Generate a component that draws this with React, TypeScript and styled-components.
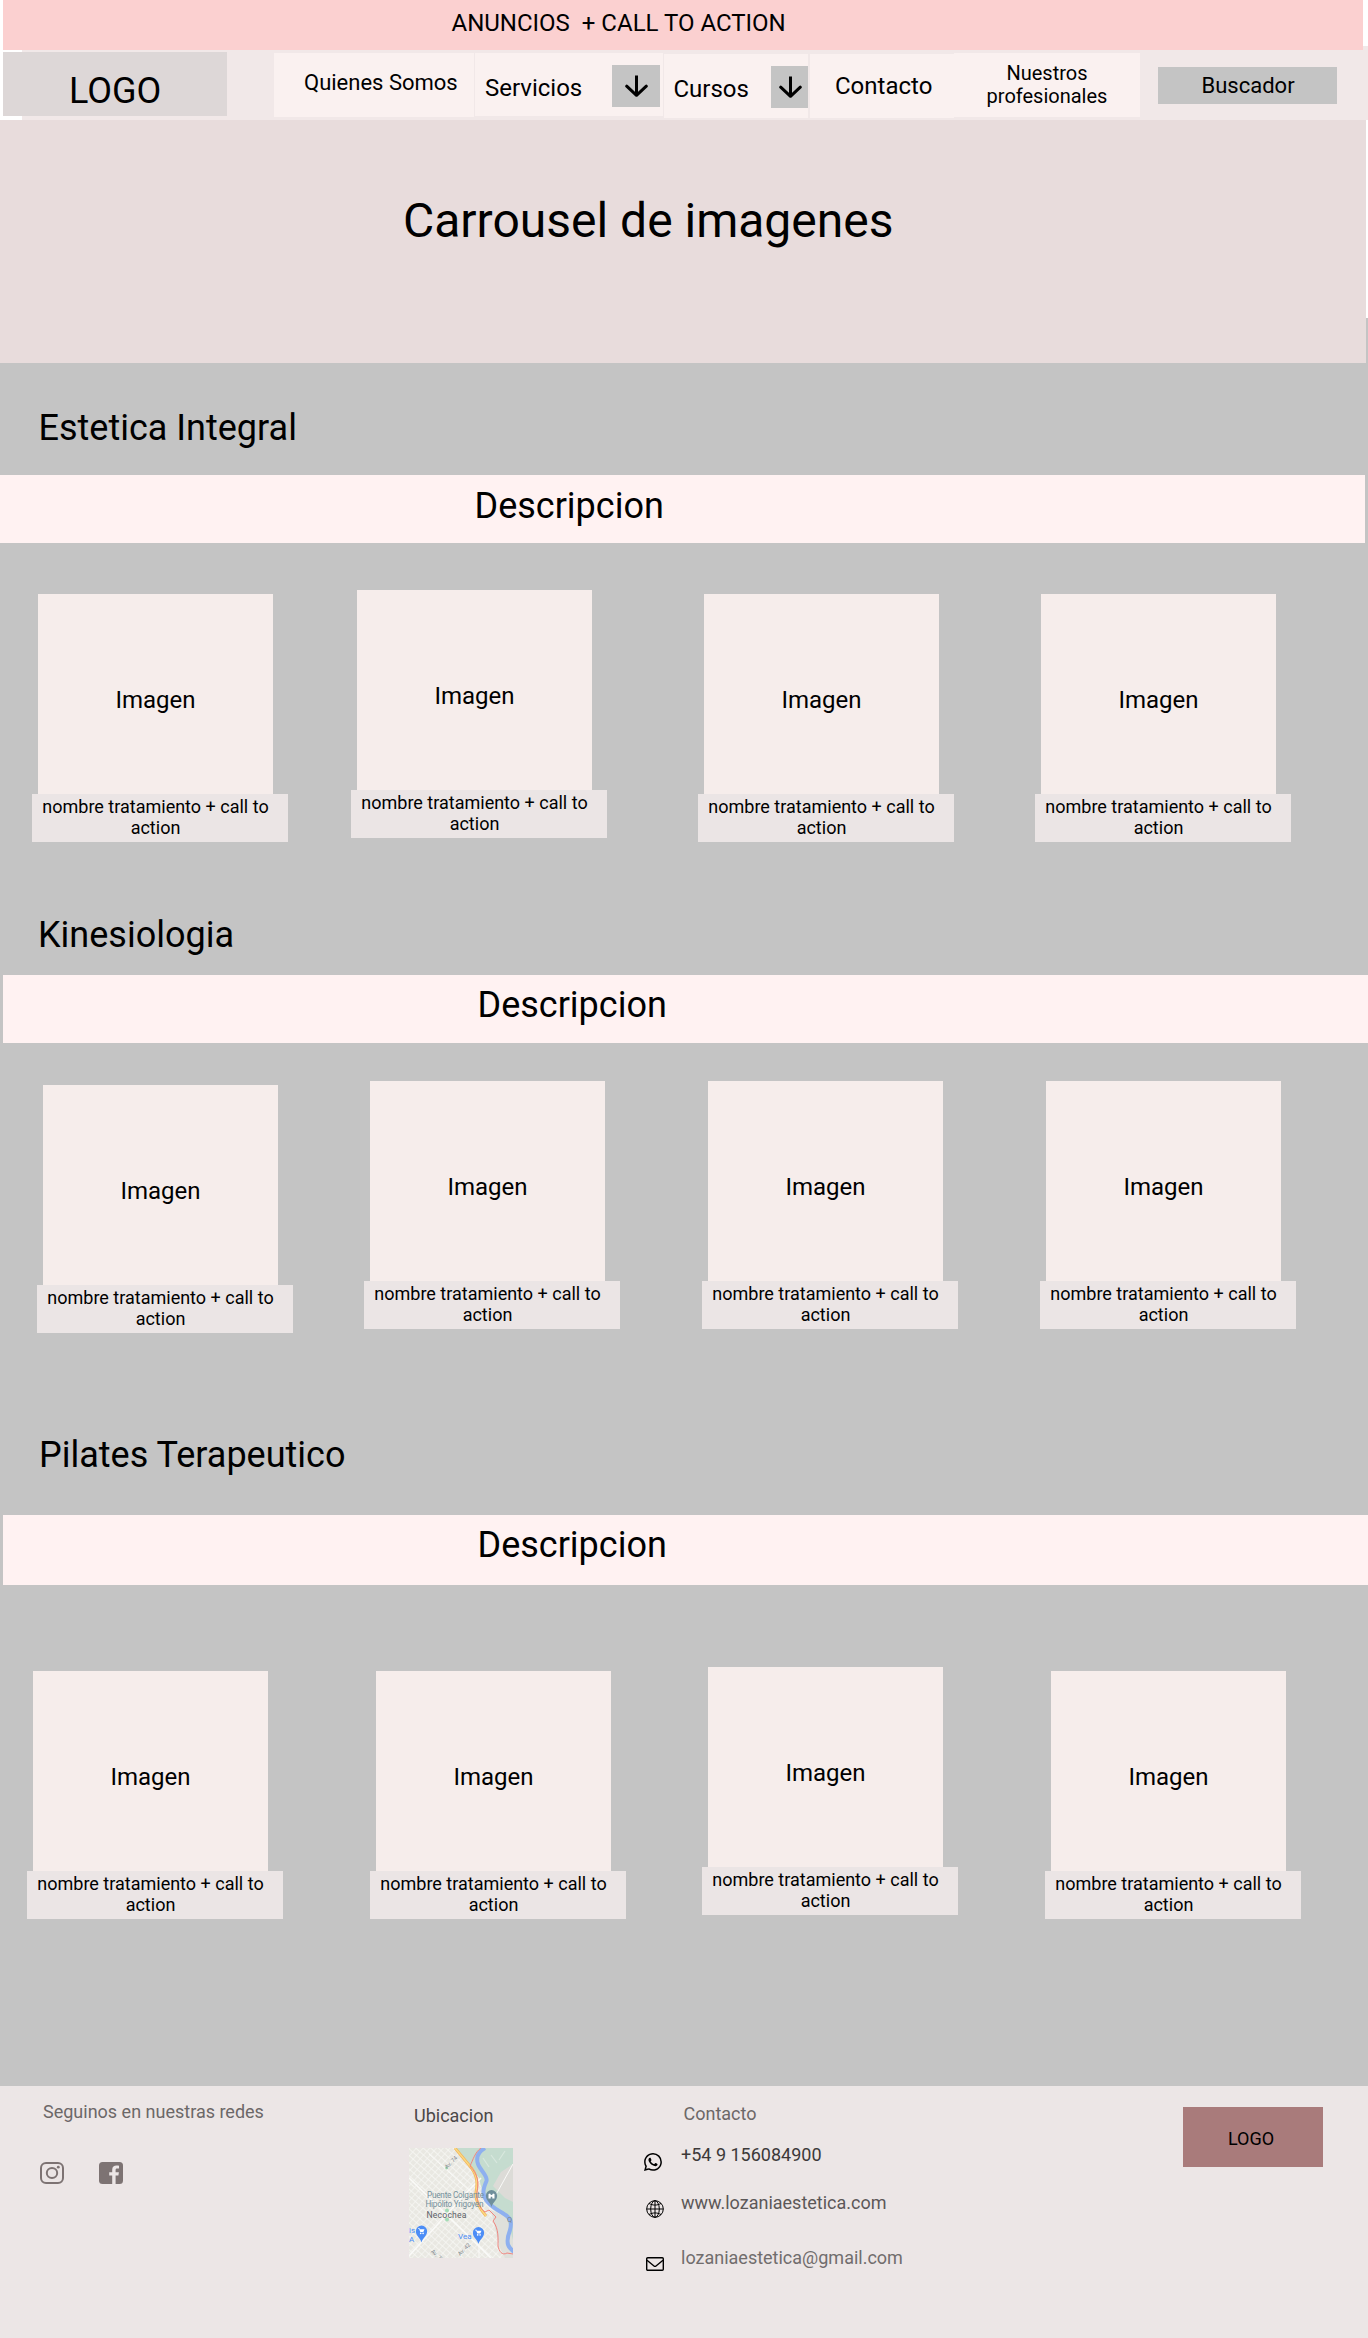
import React from "react";
import styled, { createGlobalStyle } from "styled-components";
import { BsWhatsapp } from "react-icons/bs";

const GlobalStyle = createGlobalStyle`
  * { box-sizing: border-box; }
  body {
    margin: 0;
    background: #ffffff;
    color: #000000;
    font-family: Roboto, "Liberation Sans", sans-serif;
  }
  h1, h2, h3, p { margin: 0; font-weight: 400; }
`;

const Page = styled.div`
  width: 1368px;
  height: 2338px;
  display: flex;
  flex-direction: column;
  overflow: hidden;
`;

const Announcement = styled.div`
  position: relative;
  z-index: 1;
  flex: none;
  height: 50px;
  margin: 0 5px 0 3px;
  padding: 9px 0 0 448.5px;
  background: #fbd0d0;
  font-size: 24px;
  line-height: 28px;
  white-space: pre;
`;

const Header = styled.header`
  flex: none;
  display: flex;
  align-items: flex-start;
  height: 74px;
  margin: -4px 0 0 22px;
  padding-top: 6px;
  background: #f1e8e8;
`;

const Brand = styled.div`
  width: 224px;
  height: 64px;
  margin: 0 47px 0 -19px;
  padding: 18px 0 0 66px;
  background: #ddd7d7;
  font-size: 36px;
  line-height: 42px;
`;

const Nav = styled.nav`
  display: flex;
  align-items: flex-start;
`;

const NavItem = styled.div<{
  $w: number;
  $h?: number;
  $drop?: number;
  $gap?: number;
  $pad: string;
  $size?: number;
}>`
  display: flex;
  align-items: flex-start;
  width: ${(p) => p.$w}px;
  height: ${(p) => p.$h ?? 64}px;
  margin: ${(p) => p.$drop ?? 1}px ${(p) => p.$gap ?? 1}px 0 0;
  padding: ${(p) => p.$pad};
  background: #faf1f0;
  font-size: ${(p) => p.$size ?? 24}px;
  line-height: 28px;
  white-space: nowrap;
`;

const NavText = styled.span<{ $top: number }>`
  display: block;
  padding-top: ${(p) => p.$top}px;
`;

const TwoLine = styled.span`
  width: 100%;
  font-size: 20px;
  line-height: 23px;
  text-align: center;
`;

const DropButton = styled.span<{ $w: number; $push: number }>`
  display: flex;
  justify-content: center;
  align-items: center;
  width: ${(p) => p.$w}px;
  height: 42px;
  margin: ${(p) => p.$push}px 0 0 auto;
  background: #c4c4c4;
`;

const Search = styled.div`
  width: 179px;
  height: 37px;
  margin: 15px 0 0 18px;
  padding: 6px 0 0 43.5px;
  background: #c4c4c4;
  font-size: 22px;
  line-height: 26px;
`;

const Carousel = styled.section`
  position: relative;
  z-index: 1;
  flex: none;
  width: 1366px;
  height: 243px;
  padding: 73px 0 0 403px;
  background: #e8dcdc;
  font-size: 48px;
  line-height: 56px;
`;

const Main = styled.main`
  flex: none;
  height: 1768px;
  margin-top: -45px;
  padding-top: 45px;
  background: #c4c4c4;
`;

const Section = styled.section<{ $top: number }>`
  padding-top: ${(p) => p.$top}px;
`;

const Title = styled.h2<{ $left: number }>`
  padding-left: ${(p) => p.$left}px;
  font-size: 36px;
  line-height: 42px;
`;

const Description = styled.p<{ $top: number; $h: number; $margin: string; $pad: number }>`
  height: ${(p) => p.$h}px;
  margin: ${(p) => p.$top}px ${(p) => p.$margin};
  padding: ${(p) => p.$pad}px 0 0 474.5px;
  background: #fff2f2;
  font-size: 36px;
  line-height: 42px;
`;

const Cards = styled.div<{ $top: number; $left: number; $cols: string }>`
  display: grid;
  grid-template-columns: ${(p) => p.$cols};
  align-items: start;
  height: 252px;
  margin-top: ${(p) => p.$top}px;
  padding-left: ${(p) => p.$left}px;
`;

const Card = styled.article<{ $drop: number }>`
  width: 256px;
  padding-top: ${(p) => p.$drop}px;
`;

const CardImage = styled.div`
  width: 235px;
  height: 200px;
  margin-left: 6px;
  padding-top: 92px;
  background: #f6edeb;
  font-size: 24px;
  line-height: 28px;
  text-align: center;
`;

const CardLabel = styled.div`
  height: 48px;
  padding: 2px 9px 0 0;
  background: #ebe5e5;
  font-size: 18px;
  line-height: 21px;
  text-align: center;
`;

const Footer = styled.footer`
  flex: none;
  display: flex;
  align-items: flex-start;
  height: 252px;
  background: #ece6e6;
  font-size: 18px;
  line-height: 21px;
`;

const Social = styled.div`
  width: 409px;
  padding: 15px 0 0 40px;
`;

const FootText = styled.p<{ $color: string; $indent?: number }>`
  padding-left: ${(p) => p.$indent ?? 0}px;
  color: ${(p) => p.$color};
`;

const SocialIcons = styled.div`
  display: flex;
  gap: 35px;
  margin-top: 40px;
  svg { display: block; }
`;

const Location = styled.div`
  width: 235px;
  padding-top: 19px;
  svg { display: block; margin-top: 22px; }
`;

const Contact = styled.div`
  width: 539px;
  padding-top: 17px;
`;

const ContactRow = styled.div<{ $top: number; $indent: number; $drop: number }>`
  display: flex;
  align-items: flex-start;
  height: 21px;
  margin-top: ${(p) => p.$top}px;
  svg {
    display: block;
    flex: none;
    margin: ${(p) => p.$drop}px ${(p) => 19 - p.$indent}px 0 ${(p) => p.$indent}px;
  }
`;

const FootLogo = styled.div`
  width: 140px;
  height: 60px;
  margin-top: 21px;
  padding: 21px 0 0 45px;
  background: #a97b7b;
`;

const ArrowDown = () => (
  <svg width="24" height="24" viewBox="0 0 24 24" fill="none" stroke="#000" strokeWidth="3">
    <path d="M12.5 1.5V21" />
    <path d="M2.7 12.2L12.5 21.3L22.3 12.2" strokeLinecap="round" strokeLinejoin="round" />
  </svg>
);

const Instagram = () => (
  <svg width="24" height="22" viewBox="0 0 24 22" fill="none" stroke="#7d7373">
    <rect x="1" y="1" width="22" height="20" rx="5" strokeWidth="2" />
    <ellipse cx="12" cy="11" rx="5.2" ry="4.9" strokeWidth="2" />
    <circle cx="18.3" cy="5.2" r="1.4" fill="#7d7373" stroke="none" />
  </svg>
);

const Facebook = () => (
  <svg width="24" height="22" viewBox="0 0 24 22">
    <rect width="24" height="22" rx="3.5" fill="#7d7373" />
    <path
      d="M13.2 22V13.4H10.2V10.3H13.2V7.8C13.2 5 15 3.6 17.6 3.6C18.7 3.6 19.6 3.7 20 3.8V6.5H18.2C16.9 6.5 16.6 7.1 16.6 8.1V10.3H19.9L19.4 13.4H16.6V22Z"
      fill="#ece6e6"
    />
  </svg>
);

const Globe = () => (
  <svg width="18" height="18" viewBox="0 0 18 18" fill="none" stroke="#000" strokeWidth="1">
    <circle cx="9" cy="9" r="8.3" />
    <ellipse cx="9" cy="9" rx="4.3" ry="8.3" />
    <path d="M9 .7V17.3M.7 9H17.3M3 3.4C6 5.6 12 5.6 15 3.4M3 14.6C6 12.4 12 12.4 15 14.6" />
  </svg>
);

const Mail = () => (
  <svg width="18" height="14" viewBox="0 0 18 14" fill="none" stroke="#000" strokeWidth="1.4">
    <rect x=".7" y=".7" width="16.6" height="12.6" rx="1" />
    <path d="M1 3.2L8 9Q9 9.8 10 9L17 3.2" />
  </svg>
);

const Pin = ({ x, y, color }: { x: number; y: number; color: string }) => (
  <g transform={`translate(${x} ${y})`}>
    <path d="M0 10.5C-1 6-5.6 4-5.6-.8A5.6 5.6 0 0 1 5.6-.8C5.6 4 1 6 0 10.5Z" fill={color} />
  </g>
);

const Cart = ({ x, y }: { x: number; y: number }) => (
  <g transform={`translate(${x} ${y})`} fill="#fff">
    <path d="M-3.4-3.2H-2L-1.6-2.2H3L1.8 .6H-1.2L-2.4-2.6H-3.4Z" />
    <circle cx="-.8" cy="1.9" r=".8" />
    <circle cx="1.6" cy="1.9" r=".8" />
  </g>
);

const CityMap = () => (
  <svg width="104" height="110" viewBox="0 0 104 110" fontFamily="Roboto, sans-serif">
    <defs>
      <pattern id="blocks" width="5" height="5" patternUnits="userSpaceOnUse" patternTransform="rotate(42)">
        <rect width="5" height="5" fill="#e9e8e2" />
        <path d="M0 0H5M0 0V5" stroke="#f8f8f5" strokeWidth="1.3" />
      </pattern>
      <clipPath id="mapEdge">
        <rect width="104" height="110" />
      </clipPath>
    </defs>
    <g clipPath="url(#mapEdge)">
      <rect width="104" height="110" fill="url(#blocks)" />
      <path d="M46 0H104V74L92 66L80 56L73 42L70 30L60 18Z" fill="#c5dccf" />
      <path d="M84 38L92 24L104 16V54L96 50Z" fill="#dcdbd7" />
      <path d="M82 62L104 72V110H96L90 98Z" fill="#dfe0db" />
      <path d="M98 70H104V92Z" fill="#c5dccf" />
      <g stroke="#fafaf8" strokeWidth="1.6" fill="none">
        <path d="M0 30L82 110" />
        <path d="M0 108L58 44L72 30" />
        <path d="M20 6L62 44" strokeWidth="1" />
        <path d="M104 16L84 52" strokeWidth="1" />
        <path d="M70 86V110" strokeWidth="1" />
      </g>
      <path d="M74 10L80 19M82 7L88 15M90 12L96 3" stroke="#d8e8de" strokeWidth="1.2" />
      <circle cx="38" cy="62.5" r="2" fill="#a3dcb5" />
      <circle cx="38" cy="71.5" r="2" fill="#a3dcb5" />
      <circle cx="37.5" cy="20" r="1.4" fill="#a3dcb5" />
      <path
        d="M76 0C69 4 67 10 69 16C71 22 79 28 77.5 33C74 41 73 46 77 52C83 60 89 62 95 66C102 70 103 74 101 82C98 90 98 97 101 100L105 104"
        stroke="#8eb0ef"
        strokeWidth="4"
        fill="none"
      />
      <path d="M46 0L60 17C68 26 69 34 67 44C66 53 71 61 77 68" stroke="#f4b65b" strokeWidth="2.8" fill="none" />
      <path d="M46 0L60 17C68 26 69 34 67 44C66 53 71 61 77 68" stroke="#fbdb83" strokeWidth="1.2" fill="none" />
      <path
        d="M72 0C66 4 64 12 61 18C69 27 70 34 68 44C67 52 70 60 76 64L80 62L87 69L84 73C90 81 89 91 89 98C90 103 93 108 98 105L104 106"
        stroke="#f0857f"
        strokeWidth="1"
        fill="none"
      />
      <g fill="#75909b" fontSize="8.2">
        <text x="18" y="50" textLength="57">Puente Colgante</text>
        <text x="16.5" y="58.5" textLength="58">Hipólito Yrigoyen</text>
      </g>
      <text x="17.5" y="69.5" fontSize="8.6" fill="#5c6167" textLength="40">Necochea</text>
      <g fill="#4c8df6" fontSize="8">
        <text x="0" y="85">is</text>
        <text x="0" y="93.5">A</text>
        <text x="49" y="91">Vea</text>
      </g>
      <g fill="#7b858c" fontSize="5.6">
        <text transform="translate(38 21) rotate(-45)">Av. 74</text>
        <text transform="translate(21.5 104) rotate(42)">Av. 75</text>
        <text transform="translate(51 108) rotate(-45)">Av. 42</text>
        <text x="98" y="74" fontSize="7.5">Q</text>
      </g>
      <Pin x={82.5} y={48.5} color="#6f8f9b" />
      <path d="M79.5 50.5V46L81 45.5L82 47H83L84 45.5L85.5 46V50.5H83.3V48.8H81.7V50.5Z" fill="#fff" />
      <Pin x={12.5} y={84} color="#4c8df6" />
      <Cart x={12.5} y={83.5} />
      <Pin x={69.5} y={85.5} color="#4c8df6" />
      <Cart x={69.5} y={85} />
    </g>
  </svg>
);

type SectionData = {
  title: string;
  top: number;
  left: number;
  bar: { top: number; h: number; margin: string; pad: number };
  row: { top: number; left: number; cols: string; drops: number[] };
};

const sections: SectionData[] = [
  {
    title: "Estetica Integral",
    top: 44,
    left: 38.5,
    bar: { top: 26, h: 68, margin: "3px 0 0", pad: 10 },
    row: { top: 47, left: 32, cols: "319px 347px 337px 256px", drops: [4, 0, 4, 4] },
  },
  {
    title: "Kinesiologia",
    top: 72,
    left: 38,
    bar: { top: 19, h: 68, margin: "0 0 3px", pad: 9 },
    row: { top: 38, left: 37, cols: "327px 338px 338px 256px", drops: [4, 0, 0, 0] },
  },
  {
    title: "Pilates Terapeutico",
    top: 101,
    left: 39,
    bar: { top: 39, h: 70, margin: "0 0 3px", pad: 9 },
    row: { top: 82, left: 27, cols: "343px 332px 343px 256px", drops: [4, 4, 0, 4] },
  },
];

export default function App() {
  return (
    <Page>
      <GlobalStyle />
      <Announcement>{"ANUNCIOS  + CALL TO ACTION"}</Announcement>
      <Header>
        <Brand>LOGO</Brand>
        <Nav>
          <NavItem $w={200} $pad="16px 0 0 30px" $size={22}>Quienes Somos</NavItem>
          <NavItem $w={188} $h={63} $pad="0 3px 0 10px">
            <NavText $top={21}>Servicios</NavText>
            <DropButton $w={48} $push={12}><ArrowDown /></DropButton>
          </NavItem>
          <NavItem $w={144} $drop={2} $gap={2} $pad="0 0 0 9.5px">
            <NavText $top={21}>Cursos</NavText>
            <DropButton $w={37} $push={12}><ArrowDown /></DropButton>
          </NavItem>
          <NavItem $w={144} $drop={2} $gap={0} $pad="18px 0 0 25px">Contacto</NavItem>
          <NavItem $w={186} $gap={0} $pad="9px 0 0 0">
            <TwoLine>Nuestros<br />profesionales</TwoLine>
          </NavItem>
        </Nav>
        <Search>Buscador</Search>
      </Header>
      <Carousel>Carrousel de imagenes</Carousel>
      <Main>
        {sections.map((s) => (
          <Section key={s.title} $top={s.top}>
            <Title $left={s.left}>{s.title}</Title>
            <Description $top={s.bar.top} $h={s.bar.h} $margin={s.bar.margin} $pad={s.bar.pad}>
              Descripcion
            </Description>
            <Cards $top={s.row.top} $left={s.row.left} $cols={s.row.cols}>
              {s.row.drops.map((d, i) => (
                <Card key={i} $drop={d}>
                  <CardImage>Imagen</CardImage>
                  <CardLabel>nombre tratamiento + call to action</CardLabel>
                </Card>
              ))}
            </Cards>
          </Section>
        ))}
      </Main>
      <Footer>
        <Social>
          <FootText $color="#6c6868" $indent={3}>Seguinos en nuestras redes</FootText>
          <SocialIcons><Instagram /><Facebook /></SocialIcons>
        </Social>
        <Location>
          <FootText $color="#4b4848" $indent={5}>Ubicacion</FootText>
          <CityMap />
        </Location>
        <Contact>
          <FootText $color="#6c6868" $indent={39.5}>Contacto</FootText>
          <ContactRow $top={20} $indent={0} $drop={9}>
            <BsWhatsapp size={18} color="#000" />
            <FootText $color="#3c3939">+54 9 156084900</FootText>
          </ContactRow>
          <ContactRow $top={27} $indent={2} $drop={8}>
            <Globe />
            <FootText $color="#5c5858">www.lozaniaestetica.com</FootText>
          </ContactRow>
          <ContactRow $top={34} $indent={2} $drop={10}>
            <Mail />
            <FootText $color="#716d6d">lozaniaestetica@gmail.com</FootText>
          </ContactRow>
        </Contact>
        <FootLogo>LOGO</FootLogo>
      </Footer>
    </Page>
  );
}
